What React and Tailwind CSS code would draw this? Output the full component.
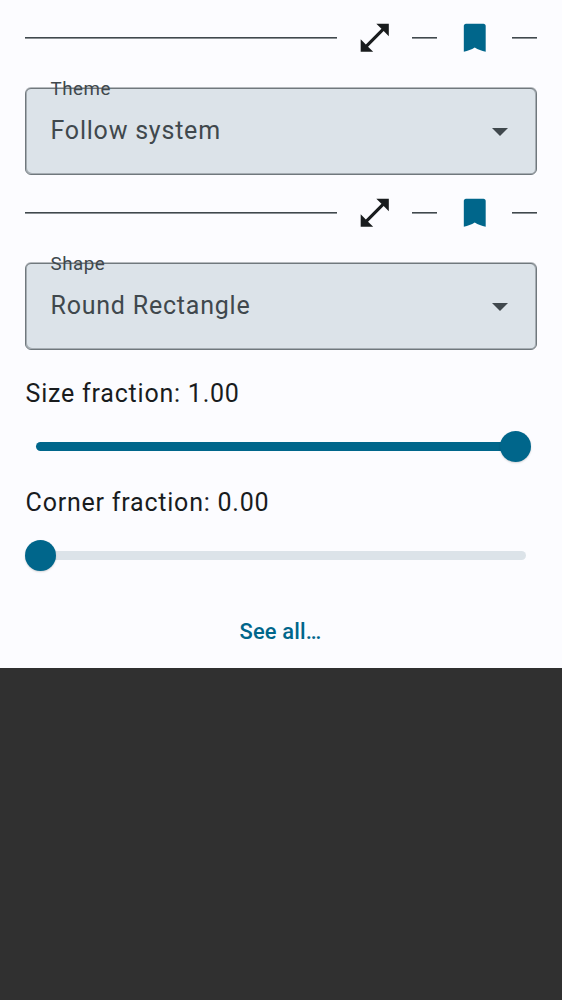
function Line({ className }) {
  return (
    <div className={className}>
      <div className="h-px bg-[#40484d]" />
      <div className="h-px bg-[#40484d]/60" />
    </div>
  );
}

function Toolbar() {
  return (
    <div className="flex h-[75px] items-center gap-[12px] px-[25px]">
      <Line className="mt-[1px] flex-1" />
      <button className="flex h-[50px] w-[51px] items-center justify-center">
        <svg viewBox="0 0 24 24" className="h-[37.5px] w-[37.5px] shrink-0 fill-[#191c1e]">
          <path d="M21 11V3h-8l3.29 3.29-10 10L3 13v8h8l-3.29-3.29 10-10z" />
        </svg>
      </button>
      <Line className="mt-[1px] w-[25px]" />
      <button className="flex h-[50px] w-[51px] items-center justify-center">
        <svg viewBox="0 0 24 24" className="h-[37.5px] w-[37.5px] shrink-0 fill-[#00668b]">
          <path d="M17.6 3H6.4c-.8 0-1.4.6-1.4 1.4V21c2.6-.5 4.9-1.4 7-2.7 2.1 1.3 4.4 2.2 7 2.7V4.4c0-.8-.6-1.4-1.4-1.4z" />
        </svg>
      </button>
      <Line className="mt-[1px] w-[25px]" />
    </div>
  );
}

function Field({ label, value }) {
  return (
    <div className="flex h-[100px] flex-col px-[25px] pt-[13px]">
      <div className="relative flex h-[87px] items-center justify-between rounded-[6px] border border-[#70787d] bg-[#dce3e9] pr-[28.5px] pl-[24.5px] text-[#40484d] shadow-[0_-1px_0_0_#70787d80,inset_1px_-1px_0_0_#70787d80,inset_-1px_0_0_0_#70787d80]">
        <span className="absolute top-[-12px] left-[24.5px] text-[18.75px] leading-[25px] tracking-[0.5px]">{label}</span>
        <span className="pb-[3px] text-[25px] leading-[37px] tracking-[0.78px]">{value}</span>
        <svg viewBox="0 0 16 8" className="mt-[1px] h-[8px] w-[16px] fill-[#40484d]">
          <path d="M0 0h16L8 8z" />
        </svg>
      </div>
    </div>
  );
}

function Slider({ label, full }) {
  return (
    <div className="px-[25px]">
      <div className="h-[37px] pl-[0.6px] text-[25px] leading-[37px] tracking-[0.78px] text-[#191c1e]">{label}</div>
      <div className="relative -mt-[2px] mb-[2px] flex h-[72px] items-center px-[11px]">
        <div className={full ? "h-[9px] flex-1 rounded-full bg-[#00668b]" : "h-[9px] flex-1 rounded-full bg-[#dce3e9]"} />
        <div
          className={
            full
              ? "absolute right-[6px] h-[31px] w-[31px] rounded-full bg-[#00668b] shadow-[0_1px_2px_rgba(0,0,0,0.16)]"
              : "absolute left-0 h-[31px] w-[31px] rounded-full bg-[#00668b] shadow-[0_1px_2px_rgba(0,0,0,0.16)]"
          }
        />
      </div>
    </div>
  );
}

export default function App() {
  return (
    <div className="flex h-[1000px] w-[562px] flex-col bg-[#303030] font-['Roboto',sans-serif]">
      <div className="h-[668px] bg-[#fcfcff]">
        <Toolbar />
        <Field label="Theme" value="Follow system" />
        <Toolbar />
        <Field label="Shape" value="Round Rectangle" />
        <div className="pt-[25px]">
          <Slider label="Size fraction: 1.00" full />
          <Slider label="Corner fraction: 0.00" />
        </div>
        <div className="flex h-[78px] items-center justify-center pr-[1px] text-[21.9px] font-medium tracking-[0.16px] text-[#00668b]">
          See all…
        </div>
      </div>
    </div>
  );
}
